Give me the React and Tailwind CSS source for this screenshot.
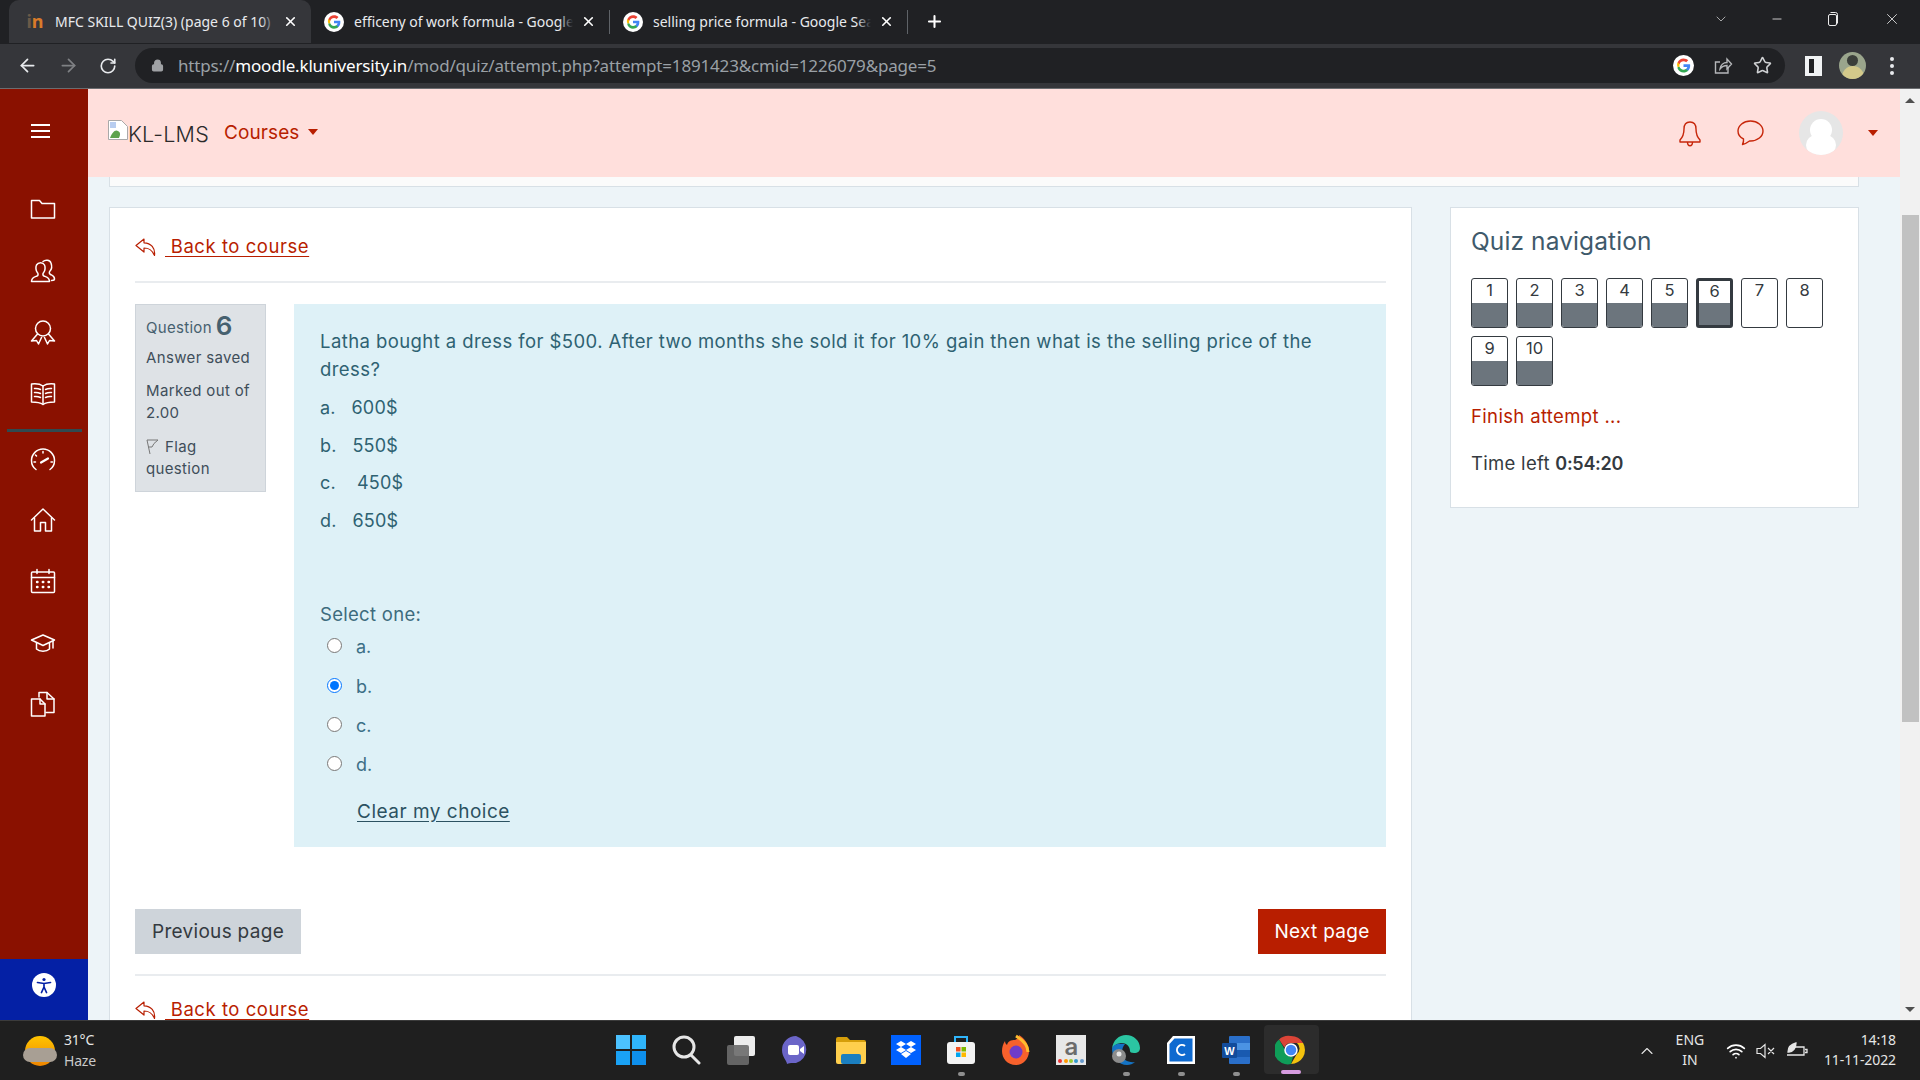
import React from 'react'
import { X, Plus, ArrowLeft, ArrowRight, RotateCw, Lock, Star, ChevronDown, Minus, ChevronUp, Wifi } from 'lucide-react'

const poppins = { fontFamily: 'Inter, sans-serif' }

function GoogleG({ size = 20 }) {
  return (
    <svg width={size} height={size} viewBox="0 0 24 24" className="shrink-0">
      <circle cx="12" cy="12" r="12" fill="#fff" />
      <path d="M19.6 12.2c0-.6 0-1.100-.1-1.600H12v3h4.300c-.2 1-.8 1.900-1.600 2.400v2h2.600c1.500-1.400 2.300-3.400 2.300-5.800z" fill="#4285f4" />
      <path d="M12 20c2.200 0 4-.7 5.300-2l-2.600-2c-.7.500-1.600.8-2.700.8-2.100 0-3.900-1.400-4.500-3.300H5.300v2.100C6.600 18.200 9.100 20 12 20z" fill="#34a853" />
      <path d="M7.500 13.500c-.3-1-.3-2 0-3V8.400H5.300c-.9 1.800-.9 3.400 0 5.200z" fill="#fbbc05" />
      <path d="M12 7.200c1.200 0 2.200.4 3.100 1.200l2.300-2.300C16 4.800 14.200 4 12 4 9.100 4 6.600 5.800 5.300 8.400l2.200 2.100c.6-1.900 2.400-3.300 4.500-3.300z" fill="#ea4335" />
    </svg>
  )
}

function Tab({ active, icon, title, width, pad }) {
  return (
    <div className={`flex items-center h-[43px] rounded-t-[10px] pr-[13px] ${width} ${pad} ${active ? 'bg-[#35363a]' : ''}`}>
      <div className="w-[20px] flex justify-center shrink-0">{icon}</div>
      <div className="ml-[10px] flex-1 relative overflow-hidden whitespace-nowrap text-[14px] text-[#e8eaed]">
        {title}
        <div className={`absolute right-0 top-0 bottom-0 w-[14px] bg-gradient-to-r from-transparent ${active ? 'to-[#35363a]' : 'to-[#202124]'}`} />
      </div>
      <X size={15} strokeWidth={2.6} className="ml-[8px] text-white shrink-0" />
    </div>
  )
}

function Tabs() {
  return (
    <div className="h-[44px] bg-[#202124] flex items-start pl-[9px] relative" style={{ fontFamily: '"Noto Sans", sans-serif' }}>
      <Tab active width="w-[302px]" pad="pl-[16px]" title="MFC SKILL QUIZ(3) (page 6 of 10)" icon={<span className="font-bold text-[18px] text-[#d97b29]"><span className="text-[#6b5a48]">i</span>n</span>} />
      <Tab width="w-[298px]" pad="pl-[13px]" title="efficeny of work formula - Google" icon={<GoogleG />} />
      <div className="w-px h-[24px] bg-[#5f6368] mt-[10px]" />
      <Tab width="w-[297px]" pad="pl-[13px]" title="selling price formula - Google Search" icon={<GoogleG />} />
      <div className="w-px h-[24px] bg-[#5f6368] mt-[10px]" />
      <Plus size={19} strokeWidth={2.6} className="ml-[17px] mt-[12px] text-white" />
      <div className="ml-auto flex items-center h-[37px] text-[#ececec]">
        <ChevronDown size={16} strokeWidth={1} className="mr-[41px]" />
        <Minus size={14} strokeWidth={1.4} className="mr-[43px]" />
        <svg width="12" height="14" viewBox="0 0 12 14" fill="none" stroke="currentColor" className="mr-[44px]">
          <rect x="1.500" y="2.500" width="8" height="11" rx="1.500" />
          <path d="M3.500 .5h5a2 2 0 0 1 2 2v9" />
        </svg>
        <X size={18} strokeWidth={1.1} className="mr-[19px]" />
      </div>
    </div>
  )
}

function Toolbar() {
  return (
    <div className="h-[45px] bg-[#35363a] border-b border-[#6b6d70] flex items-center pb-px" style={{ fontFamily: '"Noto Sans", sans-serif' }}>
      <ArrowLeft size={21} strokeWidth={2} className="ml-[17px] text-[#e8eaed]" />
      <ArrowRight size={21} strokeWidth={2} className="ml-[20px] text-[#7f8184]" />
      <RotateCw size={18} strokeWidth={2.2} className="ml-[20px] text-[#e8eaed]" />
      <div className="ml-[18px] w-[1650px] h-[35px] rounded-full bg-[#202124] flex items-center">
        <Lock size={13} strokeWidth={2.6} className="ml-[16px] text-[#a0a2a5]" fill="#a0a2a5" />
        <div className="ml-[14px] text-[17px] tracking-[-0.17px] text-[#9aa0a6] whitespace-nowrap">
          https://<span className="text-white">moodle.kluniversity.in</span>/mod/quiz/attempt.php?attempt=1891423&amp;cmid=1226079&amp;page=5
        </div>
        <div className="ml-auto flex items-center">
          <GoogleG size={21} />
          <svg width="20" height="20" viewBox="0 0 20 20" fill="none" stroke="#b5b7ba" strokeWidth="1.400" className="ml-[19px]">
            <path d="M15 11v6H2.500V6H7" />
            <path d="M7 13c.5-4 3.500-6.500 7-6.500V3l4.500 5-4.500 5V9.500c-3 0-5 1-7 3.500z" />
          </svg>
          <Star size={19} strokeWidth={2} className="ml-[20px] mr-[13px] text-[#d0d2d4]" />
        </div>
      </div>
      <div className="ml-[20px] w-[17px] h-[20px] border-[3px] border-l-[4px] border-r-[8px] border-[#f1f3f4] bg-[#202124]" />
      <div className="ml-[17px] w-[27px] h-[27px] rounded-full bg-[#9aa58c] overflow-hidden flex flex-col items-center">
        <div className="w-[11px] h-[11px] rounded-full bg-[#3b3f3a] mt-[3px]" />
        <div className="w-[22px] h-[14px] rounded-t-full bg-[#d3c98a]" />
      </div>
      <div className="ml-[24px] flex flex-col gap-[3px]">
        <div className="w-[4px] h-[4px] rounded-full bg-[#e8eaed]" />
        <div className="w-[4px] h-[4px] rounded-full bg-[#e8eaed]" />
        <div className="w-[4px] h-[4px] rounded-full bg-[#e8eaed]" />
      </div>
    </div>
  )
}

function SideSvg({ children, top }) {
  return (
    <svg width="26" height="26" viewBox="0 0 26 26" fill="none" stroke="#fff" strokeWidth="1.500" strokeLinejoin="round" strokeLinecap="round" className="-ml-[3px]" style={{ marginTop: top }}>
      {children}
    </svg>
  )
}

function Sidebar() {
  return (
    <div className="w-[88px] shrink-0 bg-[#8a1100] flex flex-col items-center">
      <div className="mt-[35px] -ml-[7px] flex flex-col gap-[4px] w-[19px]">
        <div className="h-[2px] bg-white" />
        <div className="h-[2px] bg-white" />
        <div className="h-[2px] bg-white" />
      </div>
      <SideSvg top="58px"><path d="M1.500 6V22h23V7.500H12L9.500 4.500H1.500z" /></SideSvg>
      <SideSvg top="36px">
        <path d="M1.500 23.500c0-4 3-4.500 5.500-5.500 1.500-.7 1.300-2.500.3-3.500C5.800 13 5.500 9 6.500 7c1.800-3 6.500-3 8 0 1 2 .7 6-.8 7.500-1 1-1.200 2.800.3 3.500 2.500 1 5.500 1.500 5.500 5.500z" />
        <path d="M13 3.500c2-2 7-2 8 1.500 1 3 .5 6.500-1 8-1 1-1 2.800.5 3.500 2 1 4 1.300 4 4.500 0 1-1 1.500-3 1.500" />
      </SideSvg>
      <SideSvg top="35px">
        <circle cx="13" cy="9.500" r="7.500" />
        <path d="M7.500 15 1.500 22l5-.5 2 3.500 3-6.500" />
        <path d="M18.500 15l6 7-5-.5-2 3.500-3-6.500" />
      </SideSvg>
      <SideSvg top="35px">
        <path d="M1.500 4c4-.5 8-.5 11.500 2 3.500-2.500 7.500-2.500 11.500-2v18c-4 0-8 0-11.500 2.500C9.500 22 5.500 22 1.500 22z" />
        <path d="M13 6v18.500M4.500 8.500c2-.2 4 0 6 1M4.500 12.500c2-.2 4 0 6 1M4.500 16.500c2-.2 4 0 6 1M21.500 8.500c-2-.2-4 0-6 1M21.500 12.500c-2-.2-4 0-6 1M21.500 16.500c-2-.2-4 0-6 1" />
      </SideSvg>
      <div className="w-[75px] h-[3px] bg-[#2f4a50] mt-[23px]" />
      <SideSvg top="15px">
        <path d="M6 22.500C3 20.500 1.500 17 1.500 13.500a11.500 11.500 0 0 1 23 0c0 3.500-1.500 7-4.500 9" />
        <path d="M11 15.500l7-4" strokeWidth="2.200" />
        <path d="M13 4.500v1.500M5.500 8l1 1M4 15h1.500M21 15h1.500" />
      </SideSvg>
      <SideSvg top="34px">
        <path d="M1.500 13 13 2l11.500 11" />
        <path d="M4.500 11v13h6v-8.500h5V24h6V11" />
      </SideSvg>
      <SideSvg top="35px">
        <rect x="1.500" y="4" width="23" height="20.500" rx="1" />
        <path d="M1.500 9.500h23M7 1.500v4M19 1.500v4" />
        <path d="M7 14h.5M12.800 14h.5M18.500 14h.5M7 19h.5M12.800 19h.5M18.500 19h.5" strokeWidth="2.400" />
      </SideSvg>
      <SideSvg top="36px">
        <path d="M1.500 10 13 5l11.500 5L13 15.500z" />
        <path d="M6.500 13v6c3 3 10 3 13 0v-6" />
        <path d="M23 11v7" />
      </SideSvg>
      <SideSvg top="35px">
        <path d="M1.500 8h8.500l5 5v12H1.500z" />
        <path d="M10 8v5h5" />
        <path d="M9 6V1.500h8l7 6.500v13.500h-8" />
        <path d="M17 1.500V8h7" />
      </SideSvg>
      <div className="mt-auto w-full h-[61px] pb-[10px] bg-[#0420a5] flex items-center justify-center">
        <div className="w-[24px] h-[24px] rounded-full bg-white flex items-center justify-center">
          <svg width="20" height="20" viewBox="0 0 20 20" fill="none" stroke="#0420a5" strokeWidth="1.700" strokeLinecap="round">
            <circle cx="10" cy="4.500" r="1.600" fill="#0420a5" stroke="none" />
            <path d="M3.500 7.500 10 8.500l6.500-1M10 8.500v4M10 12l-2.500 5.500M10 12l2.500 5.500" />
          </svg>
        </div>
      </div>
    </div>
  )
}

function TopHeader() {
  return (
    <div className="h-[88px] bg-[#ffdfdc] flex items-center shrink-0" style={poppins}>
      <svg width="20" height="20" viewBox="0 0 20 20" className="ml-[20px] -mt-[6px]">
        <path d="M.5.5h13l6 6v13H.5z" fill="#fff" stroke="#a9a9a9" />
        <path d="M2 18c2-5 5-9 8-7 2 1 3 3 1 7z" fill="#5da34d" />
        <path d="M2 2h6v6H2z" fill="#b8cdf0" />
      </svg>
      <div className="text-[21.500px] text-[#2a2a2a] font-light tracking-[0.2px] mt-[3px]">KL-LMS</div>
      <div className="ml-[15px] text-[19px] text-[#b81e00] tracking-[0.1px]">Courses</div>
      <div className="ml-[9px] -mt-[2px] w-0 h-0 border-x-[5px] border-x-transparent border-t-[6px] border-t-[#b81e00]" />
      <div className="ml-auto flex items-center">
        <svg width="24" height="28" viewBox="0 0 24 28" fill="none" stroke="#c7260a" strokeWidth="1.400" strokeLinejoin="round" className="mt-[2px]">
          <path d="M12 2c-4 0-6 3-6 7 0 5-1 8-4 11v2h20v-2c-3-3-4-6-4-11 0-4-2-7-6-7z" />
          <path d="M9.500 22c0 5 5 5 5 0" />
        </svg>
        <svg width="30" height="30" viewBox="0 0 30 30" fill="none" stroke="#c7260a" strokeWidth="1.400" strokeLinejoin="round" className="ml-[33px]">
          <path d="M15.500 3C8.500 3 3 7.500 3 13c0 3.500 2.200 6.500 5.500 8 .3 2-.3 4-1 5.500 3-.5 5-2 7-3.500h1c7 0 12.500-4.500 12.500-10S22.500 3 15.500 3z" />
        </svg>
        <div className="ml-[34px] w-[44px] h-[44px] rounded-full bg-[#e6e6e6] overflow-hidden flex flex-col items-center">
          <div className="w-[22px] h-[26px] rounded-full bg-white mt-[8px]" />
          <div className="w-[30px] h-[24px] rounded-full bg-white -mt-[6px]" />
        </div>
        <div className="ml-[25px] mr-[22px] w-0 h-0 border-x-[5px] border-x-transparent border-t-[6px] border-t-[#b81e00]" />
      </div>
    </div>
  )
}

function BackLink({ className }) {
  return (
    <a className={`flex items-center text-[#b81e00] ${className}`}>
      <svg width="21" height="18" viewBox="0 0 21 18" fill="none" stroke="currentColor" strokeWidth="1.200" strokeLinejoin="round" className="shrink-0">
        <path d="M9 1 1 7.500 9 14v-4c5 0 8 1.500 10.500 7.500C20.500 10 16 5 9 4.800z" />
      </svg>
      <span className="ml-[9px] text-[18.500px] underline underline-offset-[3px] whitespace-pre tracking-[0.55px]"> Back to course</span>
    </a>
  )
}

function QuestionInfo() {
  return (
    <div className="w-[131px] h-[188px] shrink-0 bg-[#dee2e6] border border-[#ced4da] pl-[10px] text-[15px] text-[#3f4e5a]">
      <div className="h-[34px] flex items-end whitespace-nowrap tracking-[0.3px] text-[#46606f]">
        Question <span className="ml-[4px] text-[26px] font-semibold leading-[26px]">6</span>
      </div>
      <div className="mt-[8px] leading-[22px] whitespace-nowrap tracking-[0.35px]">Answer saved</div>
      <div className="mt-[11px] leading-[22px] tracking-[0.35px]">Marked out of<br />2.00</div>
      <div className="mt-[12px] leading-[22px] tracking-[0.35px]">
        <svg width="13" height="16" viewBox="0 0 13 16" fill="none" stroke="#777" strokeWidth="1" className="inline mr-[6px] align-[-3px]">
          <path d="M1 1l3 14M1 1h11L8 4.500 6 8 2.500 8" />
        </svg>Flag<br />question
      </div>
    </div>
  )
}

function Choice({ letter, checked, h }) {
  return (
    <label className={`flex items-center text-[18px] text-[#3c6f86] ${h}`}>
      <input type="radio" name="q6" checked={!!checked} readOnly className="ml-[7px] w-[15px] h-[15px] m-0" />
      <span className="ml-[14px] mt-[2px]">{letter}</span>
    </label>
  )
}

function QuestionBody() {
  return (
    <div className="flex-1 h-[543px] bg-[#def1f7] pl-[26px] pr-[60px] text-[#2e6272]">
      <p className="pt-[23px] text-[18.500px] leading-[28px] tracking-[0.42px]">
        Latha bought a dress for $500. After two months she sold it for 10% gain then what is the selling price of the dress?
      </p>
      <div className="mt-[6px] text-[18px] leading-[37.500px] tracking-[0.2px]">
        <div>a.&nbsp;&nbsp; 600$</div>
        <div>b.&nbsp;&nbsp; 550$</div>
        <div>c.&nbsp;&nbsp;&nbsp; 450$</div>
        <div>d.&nbsp;&nbsp; 650$</div>
      </div>
      <div className="mt-[61px] text-[18.500px] leading-[28px] tracking-[0.3px] text-[#3d6b7d]">Select one:</div>
      <div className="-mt-[2px]">
        <Choice letter="a." h="h-[39px]" />
        <Choice letter="b." checked h="h-[40px]" />
        <Choice letter="c." h="h-[39px]" />
        <Choice letter="d." h="h-[39px]" />
      </div>
      <a className="block mt-[16px] ml-[37px] text-[19px] leading-[26px] underline underline-offset-[3px] tracking-[0.5px] text-[#2c5261]">Clear my choice</a>
    </div>
  )
}

function QuizCard() {
  return (
    <div className="w-[1303px] h-[900px] shrink-0 bg-white border border-[#d8e0e6] px-[25px]">
      <BackLink className="h-[73px] pt-[5px]" />
      <div className="h-[2px] bg-[#e9ecef]" />
      <div className="mt-[21px] flex gap-[28px]">
        <QuestionInfo />
        <QuestionBody />
      </div>
      <div className="mt-[62px] flex justify-between text-[19px] tracking-[0.3px]">
        <button className="w-[166px] h-[45px] pt-[2px] bg-[#ced4da] text-[#343a40]">Previous page</button>
        <button className="w-[128px] h-[45px] pt-[2px] bg-[#b81e00] text-white">Next page</button>
      </div>
      <div className="mt-[20px] h-[2px] bg-[#e9ecef]" />
      <BackLink className="mt-[20px]" />
    </div>
  )
}

function NavBtn({ n, done, current }) {
  return (
    <div className={`w-[37px] h-[50px] rounded-[3px] overflow-hidden border-[#343a40] bg-white text-[16.500px] text-[#343a40] text-center ${current ? 'border-[3px] leading-[20px]' : 'border leading-[22px]'}`}>
      <div className={current ? 'h-[22px]' : 'h-[24px]'}>{n}</div>
      {done && <div className="h-full bg-[#6c757d]" />}
    </div>
  )
}

function QuizNav() {
  const nums = [1, 2, 3, 4, 5, 6, 7, 8, 9, 10]
  return (
    <div className="w-[409px] h-[301px] shrink-0 bg-white border border-[#d8e0e6] pl-[20px]">
      <div className="pt-[15px] text-[24.500px] leading-[36px] text-[#3f5a6b] tracking-[0.1px]">Quiz navigation</div>
      <div className="mt-[19px] w-[360px] flex flex-wrap gap-x-[8px] gap-y-[8px]">
        {nums.map(n => <NavBtn key={n} n={n} done={n !== 7 && n !== 8} current={n === 6} />)}
      </div>
      <div className="mt-[16px] text-[18.500px] leading-[28px] text-[#b81e00] tracking-[0.35px]">Finish attempt ...</div>
      <div className="mt-[19px] text-[18.500px] leading-[28px] text-[#343a40] tracking-[0.3px]">Time left <b className="font-semibold text-[18px] tracking-[-0.3px]">0:54:20</b></div>
    </div>
  )
}

function Scrollbar() {
  return (
    <div className="w-[20px] shrink-0 bg-[#f1f1f1] relative flex flex-col items-center">
      <div className="mt-[9px] w-0 h-0 border-x-[5px] border-x-transparent border-b-[5px] border-b-[#505050]" />
      <div className="mt-[112px] w-[17px] h-[507px] bg-[#c1c1c1]" />
      <div className="mt-auto mb-[8px] w-0 h-0 border-x-[5px] border-x-transparent border-t-[5px] border-t-[#505050]" />
    </div>
  )
}

const taskIcons = [
  <svg width="30" height="30" viewBox="0 0 30 30"><rect width="14" height="14" fill="#4cc2ff" /><rect x="16" width="14" height="14" fill="#2fb5fb" /><rect y="16" width="14" height="14" fill="#1aa2f5" /><rect x="16" y="16" width="14" height="14" fill="#0e8fec" /></svg>,
  <svg width="30" height="30" viewBox="0 0 30 30" fill="none" stroke="#e6e6e6" strokeWidth="3"><circle cx="13" cy="12" r="10" /><path d="M20 20l8 8" strokeLinecap="round" /></svg>,
  <svg width="30" height="30" viewBox="0 0 30 30"><rect x="8" y="1" width="21" height="20" rx="2" fill="#ececec" /><rect x="1" y="10" width="22" height="20" rx="2" fill="#6b6b6b" opacity=".9" /></svg>,
  <svg width="30" height="30" viewBox="0 0 30 30"><path d="M15 1a14 14 0 0 1 0 27c-3 0-6-.5-9 1 0-3-5-7-5-14A14 14 0 0 1 15 1z" fill="#6b65c8" /><rect x="7" y="10" width="11" height="10" rx="2" fill="#fff" /><path d="M19 14l4-3v8l-4-3z" fill="#fff" /></svg>,
  <svg width="32" height="30" viewBox="0 0 32 30"><path d="M1 4a2 2 0 0 1 2-2h9l3 3h14a2 2 0 0 1 2 2v3H1z" fill="#d69e0a" /><path d="M1 7h30v20a2 2 0 0 1-2 2H3a2 2 0 0 1-2-2z" fill="#ffcf4d" /><rect x="6" y="19" width="20" height="10" rx="2" fill="#1b7fc0" /></svg>,
  <div className="w-[30px] h-[30px] bg-[#0061fe] flex items-center justify-center"><svg width="22" height="20" viewBox="0 0 22 20" fill="#fff"><path d="M6 1l5 3-5 3-5-3zM16 1l5 3-5 3-5-3zM6 7l5 3-5 3-5-3zM16 7l5 3-5 3-5-3zM6 14l5-3 5 3-5 4z" /></svg></div>,
  <svg width="30" height="30" viewBox="0 0 30 30"><path d="M9 7V2h12v5" fill="none" stroke="#2fb5fb" strokeWidth="2" /><rect x="1" y="7" width="28" height="22" rx="3" fill="#f3f3f3" /><rect x="10" y="12" width="4.500" height="4.500" fill="#f25022" /><rect x="15.500" y="12" width="4.500" height="4.500" fill="#7fba00" /><rect x="10" y="17.500" width="4.500" height="4.500" fill="#00a4ef" /><rect x="15.500" y="17.500" width="4.500" height="4.500" fill="#ffb900" /></svg>,
  <svg width="30" height="32" viewBox="0 0 30 32"><path d="M15 31C6 31 1 24 1 17c0-4 1-7 3-10 0 2 1 3 2 4 1-4 4-5 8-5 3-1 4-3 4-5 5 3 10 9 10 16 0 8-6 14-13 14z" fill="#f7612c" /><path d="M15 2c5 3 12 9 12 16" fill="none" stroke="#ffbd2e" strokeWidth="3" /><circle cx="15" cy="18" r="6.500" fill="#6f3cc9" /></svg>,
  <div className="w-[30px] h-[30px] bg-[#e8e8e8] flex flex-col items-center" style={poppins}><span className="text-[24px] leading-[24px] font-semibold text-[#6c6c6c]">a</span><svg width="26" height="4" viewBox="0 0 26 4"><circle cx="2" cy="2" r="2" fill="#e33" /><circle cx="8" cy="2" r="2" fill="#f90" /><circle cx="13" cy="2" r="2" fill="#9c3" /><circle cx="18" cy="2" r="2" fill="#39c" /><circle cx="24" cy="2" r="2" fill="#69c" /></svg></div>,
  <svg width="30" height="32" viewBox="0 0 30 32"><path d="M1 15C2 6 8 1 15 1c8 0 14 6 14 13 0 3-2 5-6 5-3 0-4-1-4-2 0-4-3-8-8-8-4 0-8 2-10 6z" fill="#2bc5a2" /><path d="M1 15c0 9 7 16 15 16 3 0 6-1 8-3-6 1-13-2-13-9 0-4 1-7 3-9-7-1-12 0-13 5z" fill="#1473c4" /><circle cx="8" cy="22" r="7" fill="#8c8c8c" /><circle cx="8" cy="20" r="2.500" fill="#e5e5e5" /></svg>,
  <svg width="30" height="30" viewBox="0 0 30 30"><path d="M7 1h22v28H1V8z" fill="#fff" /><path d="M8.500 3.500H26.500v23H3.500V9z" fill="#0e6ad0" /><path d="M19 11a5 5 0 1 0 0 8" fill="none" stroke="#fff" strokeWidth="2" /></svg>,
  <svg width="30" height="30" viewBox="0 0 30 30"><rect x="8" y="1" width="21" height="28" rx="1" fill="#2a6fc9" /><rect x="8" y="8" width="21" height="7" fill="#4b93e3" /><rect x="8" y="15" width="21" height="7" fill="#195ab0" /><rect x="1" y="8" width="15" height="15" rx="1" fill="#124c9c" /><text x="8.500" y="20" fontSize="11" fontWeight="700" fill="#fff" textAnchor="middle" fontFamily="Liberation Sans">W</text></svg>,
  <svg width="32" height="32" viewBox="0 0 32 32"><path d="M16 2a14 14 0 0 1 12.100 7H16a7 7 0 0 0-6.500 4.400L4 5.500A14 14 0 0 1 16 2z" fill="#db4437" /><path d="M28.100 9A14 14 0 0 1 16 30l5.800-10A7 7 0 0 0 22 9z" fill="#f4c20d" /><path d="M4 5.500l6 10.500a7 7 0 0 0 8 6.700L16 30A14 14 0 0 1 4 5.500z" fill="#0f9d58" /><circle cx="16" cy="16" r="6" fill="#4285f4" stroke="#fff" strokeWidth="1.500" /></svg>,
]

function Taskbar() {
  return (
    <div className="h-[60px] shrink-0 bg-[#1f1f1f] border-t border-[#3b3b3b] flex items-center relative" style={{ fontFamily: '"Noto Sans", sans-serif' }}>
      <div className="ml-[25px] w-[30px] h-[30px] rounded-full bg-gradient-to-b from-[#ffc400] to-[#ee8500] relative">
        <div className="absolute left-[-2px] right-[-2px] top-[12px] h-[14px] rounded-full bg-[#a89f94]" />
      </div>
      <div className="ml-[9px] -mt-[2px] text-[14px] leading-[21px] tracking-[-0.2px] text-[#e6e6e6]">
        <div>31°C</div>
        <div className="text-[#c9c9c9]">Haze</div>
      </div>
      <div className="ml-[508px] -mt-[2px] flex">
        {taskIcons.map((icon, i) => (
          <div key={i} className={`w-[55px] h-[49px] flex justify-center items-center relative ${i === 12 ? 'bg-[#2c2c2c] rounded-[4px]' : ''}`}>
            {icon}
            {(i === 6 || i === 9 || i === 10 || i === 11) && <div className="absolute -bottom-[2px] w-[7px] h-[4px] rounded-full bg-[#8f8f8f]" />}
            {i === 12 && <div className="absolute bottom-0 w-[20px] h-[4px] rounded-full bg-[#d79ce0]" />}
          </div>
        ))}
      </div>
      <ChevronUp size={20} strokeWidth={1.300} className="ml-[318px] text-[#e6e6e6]" />
      <div className="ml-[15px] w-[36px] -mt-[1px] text-center text-[14px] leading-[20px] text-[#e6e6e6]">ENG<br />IN</div>
      <Wifi size={20} strokeWidth={2} className="ml-[18px] text-white" />
      <svg width="20" height="18" viewBox="0 0 20 18" fill="none" stroke="#e6e6e6" strokeWidth="1.200" className="ml-[10px]">
        <path d="M1 6.500h3.500L9 2.500v13l-4.500-4H1zM12 6l6 6M18 6l-6 6" />
      </svg>
      <svg width="22" height="18" viewBox="0 0 22 18" fill="none" stroke="#e6e6e6" strokeWidth="1.300" className="ml-[10px]">
        <path d="M7 5h11v8H1M19 7.500h2v3h-2" />
        <path d="M2 10C2 5 6 2 10 1c0 5-3 9-7 9z" fill="#e6e6e6" />
      </svg>
      <div className="ml-auto mr-[24px] -mt-[1px] text-right text-[14px] leading-[20px] tracking-[-0.1px] text-[#e6e6e6]">14:18<br />11-11-2022</div>
    </div>
  )
}

export default function App() {
  return (
    <div className="w-[1920px] h-[1080px] overflow-hidden flex flex-col bg-[#edf4f8]">
      <Tabs />
      <Toolbar />
      <div className="flex-1 flex min-h-0">
        <Sidebar />
        <div className="flex-1 min-w-0 flex flex-col overflow-hidden" style={poppins}>
          <TopHeader />
          <div className="ml-[21px] mr-[41px] h-[10px] shrink-0 bg-[#fbfbfb] border border-t-0 border-[#d8e0e6]" />
          <div className="ml-[21px] mt-[20px] flex gap-[38px]">
            <QuizCard />
            <QuizNav />
          </div>
        </div>
        <Scrollbar />
      </div>
      <Taskbar />
    </div>
  )
}
